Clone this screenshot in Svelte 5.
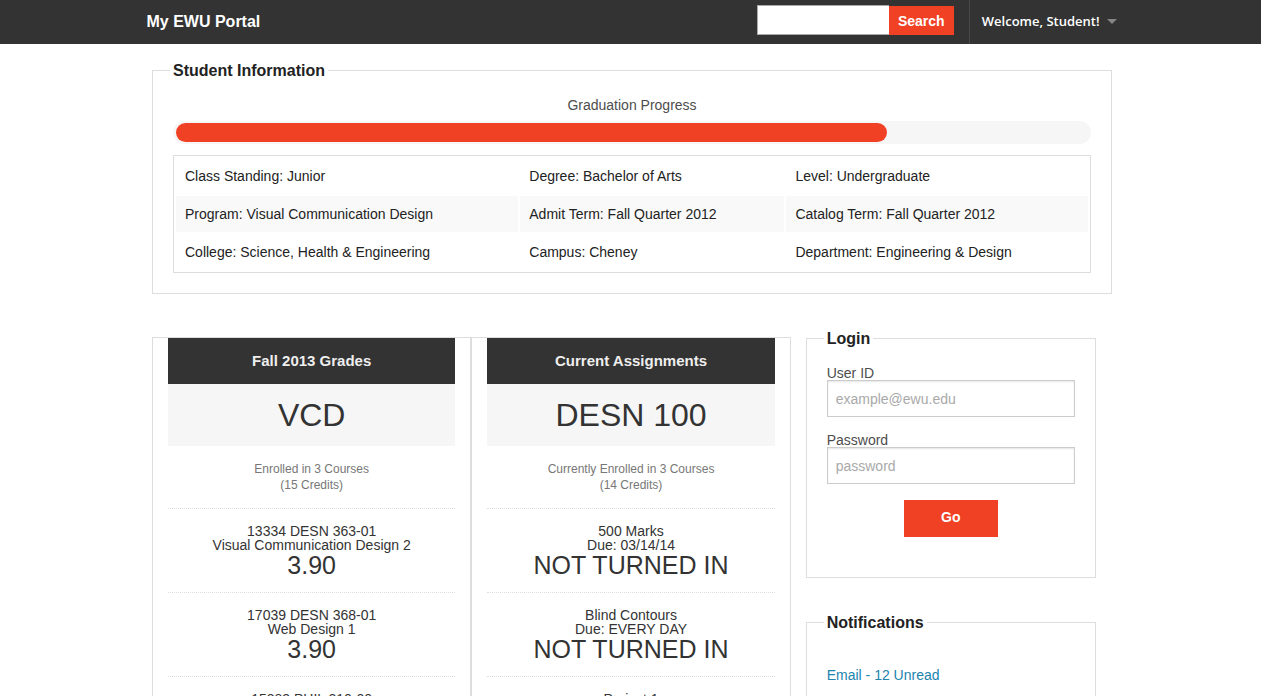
<script>
  const details = [
    ['Class Standing: Junior', 'Degree: Bachelor of Arts', 'Level: Undergraduate'],
    ['Program: Visual Communication Design', 'Admit Term: Fall Quarter 2012', 'Catalog Term: Fall Quarter 2012'],
    ['College: Science, Health & Engineering', 'Campus: Cheney', 'Department: Engineering & Design'],
  ];

  const boards = [
    {
      title: 'Fall 2013 Grades',
      code: 'VCD',
      note: ['Enrolled in 3 Courses', '(15 Credits)'],
      items: [
        ['13334 DESN 363-01', 'Visual Communication Design 2', '3.90'],
        ['17039 DESN 368-01', 'Web Design 1', '3.90'],
        ['15383 PHIL 210-00', '', ''],
      ],
    },
    {
      title: 'Current Assignments',
      code: 'DESN 100',
      note: ['Currently Enrolled in 3 Courses', '(14 Credits)'],
      items: [
        ['500 Marks', 'Due: 03/14/14', 'NOT TURNED IN'],
        ['Blind Contours', 'Due: EVERY DAY', 'NOT TURNED IN'],
        ['Project 1', '', ''],
      ],
    },
  ];

  const progress = 78;
</script>

<header class="topbar">
  <div class="topbar-inner">
    <h1><a href="#home">My EWU Portal</a></h1>
    <form class="search" role="search">
      <input type="text" aria-label="Search" />
      <button type="button">Search</button>
    </form>
    <a class="account" href="#account">Welcome, Student!<span class="caret"></span></a>
  </div>
</header>

<main>
  <fieldset class="student">
    <legend>Student Information</legend>
    <p class="caption" id="progress-caption">Graduation Progress</p>
    <div class="progress" role="progressbar" aria-labelledby="progress-caption" aria-valuenow={progress}>
      <span class="meter" style="width: {progress}%"></span>
    </div>
    <table>
      <tbody>
        {#each details as row}
          <tr>
            {#each row as cell}<td>{cell}</td>{/each}
          </tr>
        {/each}
      </tbody>
    </table>
  </fieldset>

  <div class="columns">
    <div class="boards">
      {#each boards as board}
        <section class="board">
          <h2>{board.title}</h2>
          <p class="code">{board.code}</p>
          <p class="note">{board.note[0]}<br />{board.note[1]}</p>
          <ul>
            {#each board.items as [name, info, result]}
              <li>
                <span>{name}</span>
                <span>{info}</span>
                <strong>{result}</strong>
              </li>
            {/each}
          </ul>
        </section>
      {/each}
    </div>

    <aside>
      <form>
        <fieldset class="login">
          <legend>Login</legend>
          <label for="user">User ID</label>
          <input id="user" type="text" placeholder="example@ewu.edu" />
          <label for="pass">Password</label>
          <input id="pass" type="password" placeholder="password" />
          <button type="button">Go</button>
        </fieldset>
      </form>
      <fieldset class="notifications">
        <legend>Notifications</legend>
        <a href="#email">Email - 12 Unread</a>
      </fieldset>
    </aside>
  </div>
</main>

<style>
  :global(body) {
    margin: 0;
    background: #fff;
    color: #222;
    font-family: "Liberation Sans", Arial, sans-serif;
    font-size: 14px;
  }

  :global(*) {
    box-sizing: border-box;
  }

  h1, h2, p, ul {
    margin: 0;
    padding: 0;
  }

  a {
    text-decoration: none;
  }

  button {
    border: 0;
    background: #f04124;
    color: #fff;
    font: bold 14px "Liberation Sans", Arial, sans-serif;
    cursor: pointer;
  }

  .topbar {
    background: #333;
  }

  .topbar-inner {
    display: flex;
    align-items: center;
    max-width: 1000px;
    height: 44px;
    margin: 0 auto;
    padding-left: 16px;
  }

  h1 {
    flex: 1;
    font-size: 16px;
  }

  h1 a {
    color: #fff;
  }

  .search {
    display: flex;
    width: 197px;
    height: 30px;
    margin: 0 15px 4px 0;
  }

  .search input {
    flex: 1;
    min-width: 0;
    border: 1px solid #aaa;
    border-right: 0;
    background: #fff;
    padding: 4px 8px;
  }

  .search button {
    width: 65px;
    margin-top: 1px;
    padding: 0;
  }

  .account {
    display: flex;
    align-items: center;
    gap: 7px;
    height: 100%;
    padding: 0 14px 2px 12px;
    border-left: 1px solid #484848;
    color: #fff;
    font-family: "Open Sans", sans-serif;
    font-size: 13px;
    font-weight: 600;
  }

  .caret {
    border: 5px solid transparent;
    border-top-color: #858585;
    border-bottom: 0;
  }

  main {
    max-width: 963px;
    margin: 0 auto;
    padding: 17px 0 17px 3px;
  }

  fieldset {
    min-width: 0;
    margin: 0;
    border: 1px solid #ddd;
    padding: 15px 20px 20px;
  }

  legend {
    margin-left: -3px;
    padding: 2px 3px 0;
    font-size: 16px;
    line-height: 16px;
    font-weight: bold;
  }

  .caption {
    color: #4d4d4d;
    line-height: 22px;
    text-align: center;
  }

  .progress {
    height: 23px;
    margin: 5px 0 11px;
    padding: 2px 3px;
    border-radius: 12px;
    background: #f6f6f6;
  }

  .meter {
    display: block;
    height: 100%;
    border-radius: 10px;
    background: #f04124;
  }

  table {
    width: 100%;
    border: 1px solid #ddd;
    border-spacing: 2px;
  }

  td {
    height: 36px;
    padding: 0 9px;
  }

  tr:nth-child(even) td {
    background: #f9f9f9;
  }

  .columns {
    display: grid;
    grid-template-columns: 11fr 5fr;
    gap: 15px;
    margin-top: 35px;
    padding-right: 16px;
  }

  .boards {
    display: grid;
    grid-template-columns: 1fr 1fr;
    margin-top: 8px;
    text-align: center;
  }

  .board {
    border: 1px solid #ddd;
    padding: 0 15px;
    color: #333;
  }

  h2 {
    background: #333;
    color: #eee;
    font-size: 15px;
    line-height: 46px;
  }

  .code {
    background: #f6f6f6;
    font-size: 32px;
    line-height: 62px;
  }

  .note {
    padding: 15px;
    color: #777;
    font-size: 12px;
    line-height: 16px;
  }

  ul {
    list-style: none;
  }

  li {
    height: 84px;
    border-top: 1px dotted #ddd;
    padding-top: 15px;
  }

  li span {
    display: block;
    line-height: 14px;
  }

  strong {
    display: block;
    font-size: 25px;
    font-weight: normal;
    line-height: 26px;
  }

  aside {
    display: flex;
    flex-direction: column;
    gap: 35px;
  }

  .login {
    display: flex;
    flex-direction: column;
    padding-top: 19px;
    padding-bottom: 40px;
  }

  label {
    color: #4d4d4d;
    line-height: 14px;
  }

  .login input {
    width: 100%;
    height: 37px;
    margin-bottom: 16px;
    border: 1px solid #ccc;
    background: #fff;
    box-shadow: inset 0 1px 2px rgba(0, 0, 0, 0.1);
    padding: 8px;
    font: 14px "Liberation Sans", Arial, sans-serif;
  }

  .login input::placeholder {
    color: #a9a9a9;
  }

  .login button {
    display: block;
    width: 94px;
    height: 37px;
    margin: 0 auto;
    padding: 0 0 3px;
  }

  .notifications {
    padding-top: 33px;
  }

  .notifications a {
    color: #2283ae;
    line-height: 22px;
  }
</style>
